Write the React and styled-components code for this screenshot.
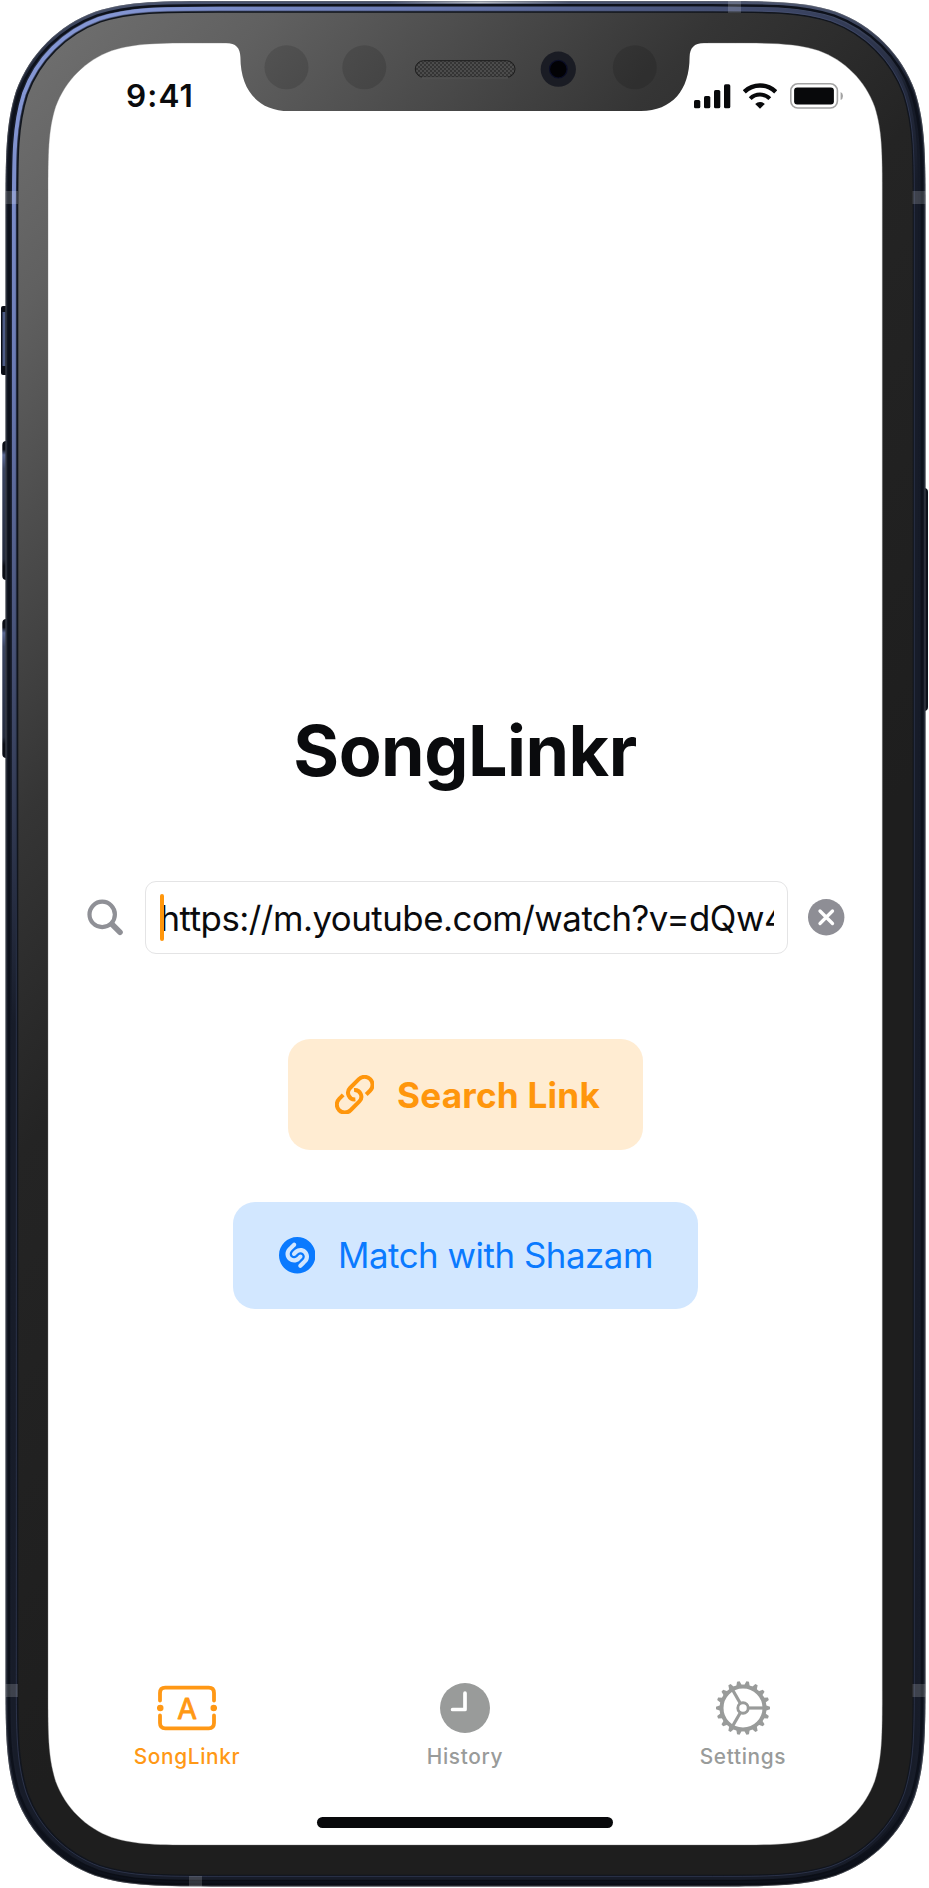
import React from "react";
import styled, { createGlobalStyle } from "styled-components";
import { SiShazam } from "react-icons/si";

const GlobalStyle = createGlobalStyle`
  body { margin: 0; background: #fff; }
  * { box-sizing: border-box; }
`;

const Device = styled.div`
  position: relative;
  width: 929px;
  height: 1888px;
  padding: 43px 47px 43px 48px;
  font-family: Inter, "Liberation Sans", sans-serif;
  color: #0a0b0d;
  overflow: hidden;
`;
const FrameArt = styled.svg`
  position: absolute;
  inset: 0;
`;
const Screen = styled.div`
  position: relative;
  height: 100%;
  display: flex;
  flex-direction: column;
`;
const StatusBar = styled.header`
  height: 106px;
  padding: 0 39px 0 78px;
  display: flex;
  align-items: center;
  justify-content: space-between;
`;
const Time = styled.span`
  font-size: 31.5px;
  font-weight: 600;
  line-height: 40px;
  letter-spacing: 1.1px;
`;
const Indicators = styled.div`
  display: flex;
  align-items: center;
  gap: 12.5px;
  svg { display: block; }
`;
const Main = styled.main`
  flex: 1;
  padding-top: 560px;
  display: flex;
  flex-direction: column;
  align-items: center;
`;
const Title = styled.h1`
  margin: 0 0 88px;
  font-size: 70px;
  line-height: 84px;
  font-weight: 700;
  letter-spacing: -0.5px;
  white-space: nowrap;
`;
const SearchRow = styled.div`
  align-self: stretch;
  height: 73px;
  margin-bottom: 85px;
  padding-left: 39px;
  display: flex;
  align-items: center;
`;
const Field = styled.div`
  width: 643px;
  height: 73px;
  margin: 0 20px 0 22px;
  padding: 0 13.5px 0 13.5px;
  border: 1.5px solid #e4e4e5;
  border-radius: 11px;
  display: flex;
  align-items: center;
  position: relative;
`;
const Caret = styled.i`
  position: absolute;
  left: 14px;
  width: 4px;
  height: 47px;
  border-radius: 2px;
  background: #ff960c;
`;
const Url = styled.div`
  flex: 1;
  overflow: hidden;
  white-space: nowrap;
  font-size: 34.8px;
  font-weight: 400;
  line-height: 48px;
  letter-spacing: -0.48px;
`;
const Action = styled.button`
  border: 0;
  padding: 0 0 0 ${(p) => p.$padLeft}px;
  width: ${(p) => p.$width}px;
  height: ${(p) => p.$height}px;
  margin-bottom: 51.5px;
  border-radius: 22px;
  display: flex;
  align-items: center;
  gap: 23px;
  white-space: nowrap;
  font: ${(p) => p.$weight} ${(p) => p.$size}px Inter, sans-serif;
  letter-spacing: ${(p) => p.$track}px;
  color: ${(p) => p.$color};
  background: ${(p) => p.$bg};
  svg { flex: none; }
`;
const TabBar = styled.nav`
  height: 119px;
  padding-top: 12px;
  display: flex;
`;
const Tab = styled.a`
  flex: 1;
  display: flex;
  flex-direction: column;
  align-items: center;
  font-size: 20.8px;
  line-height: 26px;
  font-weight: 500;
  letter-spacing: 0.68px;
  color: ${(p) => (p.$active ? "#ff9815" : "#999b9a")};
  svg { display: block; margin-bottom: 9px; }
`;
const HomeIndicator = styled.div`
  align-self: center;
  width: 296.5px;
  height: 10.5px;
  margin: 29px 0 17.5px;
  border-radius: 6px;
  background: #08090b;
`;

/* Rounded rectangle with continuous-curvature corners. */
function smoothRect(x, y, w, h, r) {
  const a = 1.52866 * r, b = 1.08849 * r, c = 0.86841 * r;
  const d = 0.63149 * r, e = 0.07491 * r, f = 0.37282 * r, g = 0.16906 * r;
  const R = x + w, B = y + h;
  return [
    `M${x + a} ${y}H${R - a}`,
    `C${R - b} ${y} ${R - c} ${y} ${R - d} ${y + e}`,
    `C${R - f} ${y + g} ${R - g} ${y + f} ${R - e} ${y + d}`,
    `C${R} ${y + c} ${R} ${y + b} ${R} ${y + a}V${B - a}`,
    `C${R} ${B - b} ${R} ${B - c} ${R - e} ${B - d}`,
    `C${R - g} ${B - f} ${R - f} ${B - g} ${R - d} ${B - e}`,
    `C${R - c} ${B} ${R - b} ${B} ${R - a} ${B}H${x + a}`,
    `C${x + b} ${B} ${x + c} ${B} ${x + d} ${B - e}`,
    `C${x + f} ${B - g} ${x + g} ${B - f} ${x + e} ${B - d}`,
    `C${x} ${B - c} ${x} ${B - b} ${x} ${B - a}V${y + a}`,
    `C${x} ${y + b} ${x} ${y + c} ${x + e} ${y + d}`,
    `C${x + g} ${y + f} ${x + f} ${y + g} ${x + d} ${y + e}`,
    `C${x + c} ${y} ${x + b} ${y} ${x + a} ${y}Z`,
  ].join("");
}

const NOTCH =
  "M222 40V43H226C236 43 240 48 240.4 57C240.4 90 258 111 289 111H641C672 111 689.6 90 689.6 57C690 48 694 43 704 43H708V40Z";

function Frame() {
  return (
    <FrameArt width="929" height="1888" viewBox="0 0 929 1888" aria-hidden="true">
      <defs>
        <linearGradient id="glass" gradientUnits="userSpaceOnUse" x1="0" y1="0" x2="909" y2="783">
          <stop offset="0" stopColor="#747474" />
          <stop offset="0.18" stopColor="#606060" />
          <stop offset="0.35" stopColor="#464646" />
          <stop offset="0.46" stopColor="#353535" />
          <stop offset="0.64" stopColor="#242424" />
          <stop offset="1" stopColor="#1e1e1e" />
        </linearGradient>
        <linearGradient id="sheen" gradientUnits="userSpaceOnUse" x1="60" y1="60" x2="600" y2="640">
          <stop offset="0" stopColor="#8496d4" />
          <stop offset="0.25" stopColor="#6a7ab4" />
          <stop offset="0.6" stopColor="#39425f" />
          <stop offset="0.85" stopColor="#171c29" />
        </linearGradient>
        <linearGradient id="rim" gradientUnits="userSpaceOnUse" x1="0" y1="0" x2="0" y2="1888">
          <stop offset="0" stopColor="#4b5571" />
          <stop offset="0.05" stopColor="#151a27" />
          <stop offset="0.95" stopColor="#181d2a" />
          <stop offset="1" stopColor="#090c13" />
        </linearGradient>
        <linearGradient id="glint" x1="0" y1="0" x2="1" y2="0">
          <stop offset="0" stopColor="#b9bdc5" stopOpacity="0" />
          <stop offset="0.5" stopColor="#b9bdc5" />
          <stop offset="1" stopColor="#b9bdc5" stopOpacity="0" />
        </linearGradient>
        <linearGradient id="key" x1="0" y1="0" x2="0" y2="1">
          <stop offset="0" stopColor="#0a0d16" />
          <stop offset="0.06" stopColor="#0a0d16" />
          <stop offset="0.1" stopColor="#5b6995" />
          <stop offset="0.2" stopColor="#39435f" />
          <stop offset="0.85" stopColor="#232a3c" />
          <stop offset="0.9" stopColor="#0a0d16" />
          <stop offset="1" stopColor="#0a0d16" />
        </linearGradient>
        <pattern id="mesh" width="4" height="4" patternUnits="userSpaceOnUse">
          <rect width="4" height="4" fill="#4c4c4c" />
          <circle cx="1" cy="1" r="0.9" fill="#292929" />
          <circle cx="3" cy="3" r="0.9" fill="#292929" />
        </pattern>
      </defs>
      <rect x="1" y="306" width="9" height="69" rx="2" fill="#0b0e17" />
      <rect x="2.5" y="312" width="3" height="54" fill="#4d5b86" />
      <rect x="2.3" y="441" width="9" height="139" rx="4" fill="url(#key)" />
      <rect x="2.3" y="619" width="9" height="139" rx="4" fill="url(#key)" />
      <rect x="919" y="488" width="9" height="223" rx="4" fill="#0e121c" />
      <path d={smoothRect(5.5, 1, 920, 1885.5, 142)} fill="url(#rim)" />
      <path d={smoothRect(6, 1.5, 919, 1884.5, 141.5)} fill="none" stroke="#60646d" strokeOpacity="0.6" />
      <path d={smoothRect(9, 5.2, 913, 1877, 139)} fill="none" stroke="#0d111b" strokeWidth="2.4" />
      <rect x="390" y="1.4" width="180" height="2" fill="url(#glint)" />
      <path d={smoothRect(13.9, 8.8, 902, 1869, 134.5)} fill="none" stroke="url(#sheen)" strokeWidth="4" />
      <path d={smoothRect(17.6, 12, 895.8, 1863.4, 131)} fill="url(#glass)" stroke="#11151d" strokeWidth="1.4" />
      <path d={smoothRect(16.3, 10.8, 898, 1865.6, 132)} fill="none" stroke="#4b587f" strokeOpacity="0.38" strokeWidth="1" />
      <path d={smoothRect(48, 43, 834.3, 1802, 101)} fill="#fff" stroke="#777" strokeOpacity="0.45" strokeWidth="0.8" />
      <path d={NOTCH} fill="url(#glass)" />
      <g fill="#fff" fillOpacity="0.17">
        <rect x="5.5" y="191" width="12.5" height="13" />
        <rect x="912.5" y="191" width="13" height="13" />
        <rect x="728" y="1" width="13" height="12" />
        <rect x="5.5" y="1684" width="12.5" height="13" />
        <rect x="912.5" y="1684" width="13" height="13" />
        <rect x="189" y="1876" width="13" height="10.5" />
      </g>
      <g fill="#000" fillOpacity="0.13">
        <circle cx="286.5" cy="67.3" r="22" />
        <circle cx="364.3" cy="67.3" r="22" />
        <circle cx="634.8" cy="67.3" r="22" />
      </g>
      <rect x="415.3" y="60.7" width="99.7" height="16.6" rx="8.3" fill="url(#mesh)" stroke="#1d1d1d" />
      <path d="M422 77.8H508" stroke="#5d5d5d" />
      <circle cx="558.3" cy="69.2" r="17.6" fill="#1a1c24" />
      <circle cx="558.3" cy="69.2" r="8.8" fill="#020205" stroke="#0a0d26" strokeWidth="1.2" />
    </FrameArt>
  );
}

const Signal = () => (
  <svg width="36.5" height="25" viewBox="0 0 36.5 25" fill="#08090b">
    <rect x="0" y="16" width="6.3" height="8.3" rx="1.6" />
    <rect x="10" y="12" width="6.3" height="12.3" rx="1.6" />
    <rect x="20" y="6" width="6.3" height="18.3" rx="1.6" />
    <rect x="30" y="0.3" width="6.3" height="24" rx="1.6" />
  </svg>
);
const Wifi = () => (
  <svg width="34" height="26" viewBox="0 0 34 26" fill="none" stroke="#08090b">
    <path d="M1.3 8.8A22.7 22.7 0 0 1 32.7 8.8" strokeWidth="4.4" />
    <path d="M7.2 15.6A13.9 13.9 0 0 1 26.8 15.6" strokeWidth="4" />
    <path d="M17 25.8L12.2 21A7 7 0 0 1 21.8 21Z" fill="#08090b" stroke="none" />
  </svg>
);
const Battery = () => (
  <svg width="53.5" height="26" viewBox="0 0 53.5 26">
    <rect x="0.8" y="0.8" width="46.6" height="24.2" rx="7" fill="none" stroke="#a3a3a3" strokeWidth="1.6" />
    <rect x="4.1" y="4.6" width="39.8" height="16.8" rx="3" fill="#08090b" />
    <path d="M50.6 9V17Q53 16 53 13Q53 10 50.6 9Z" fill="#a3a3a3" />
  </svg>
);
const SearchIcon = () => (
  <svg width="36" height="37" viewBox="0 0 36 37" fill="none" stroke="#8f9096">
    <circle cx="15.2" cy="15.4" r="12.7" strokeWidth="4.2" />
    <path d="M25 25.2L33 33.2" strokeWidth="5.6" strokeLinecap="round" />
  </svg>
);
const ClearIcon = () => (
  <svg width="36.5" height="36.5" viewBox="0 0 36.5 36.5">
    <circle cx="18.2" cy="18.2" r="18.2" fill="#8e8e95" />
    <path d="M12 12L24.5 24.5M24.5 12L12 24.5" stroke="#fff" strokeWidth="3.3" strokeLinecap="round" />
  </svg>
);
const LinkIcon = () => (
  <svg width="39.4" height="39.4" viewBox="0 0 118 118" fill="none" stroke="currentColor" strokeWidth="12">
    <path d="M93.5 58.5L105.5 46.5A24 24 0 0 0 71.5 12.5L45 39A20 20 0 0 0 61 73" />
    <path d="M24.5 59.5L12.5 71.5A24 24 0 0 0 46.5 105.5L73 79A20 20 0 0 0 57 45" />
  </svg>
);
const TicketIcon = () => (
  <svg width="60" height="54" viewBox="0 0 60 54" fill="none" stroke="currentColor" strokeWidth="3.8">
    <path
      d="M3 19.5V12Q3 6.7 8.3 6.7H51.7Q57 6.7 57 12V19.5M3 34.5V42Q3 47.3 8.3 47.3H51.7Q57 47.3 57 42V34.5"
      strokeLinecap="round"
    />
    <g fill="currentColor" stroke="none">
      <circle cx="3.2" cy="27" r="3.3" />
      <circle cx="56.8" cy="27" r="3.3" />
    </g>
    <text x="30" y="37.6" textAnchor="middle" fontSize="28.5" fontWeight="400" letterSpacing="0" fill="currentColor" strokeWidth="0.9" strokeLinejoin="round">A</text>
  </svg>
);
const ClockIcon = () => (
  <svg width="54" height="54" viewBox="0 0 54 54">
    <circle cx="27" cy="27" r="25" fill="currentColor" />
    <path d="M27 12.2V28.5H14.6" fill="none" stroke="#fff" strokeWidth="3.7" strokeLinecap="round" strokeLinejoin="round" />
  </svg>
);
const TEETH = Array.from({ length: 18 }, (_, i) => i * 20);
const GearIcon = () => (
  <svg width="54" height="54" viewBox="0 0 54 54" fill="none" stroke="currentColor">
    <circle cx="27" cy="27" r="21.5" strokeWidth="4" />
    <circle cx="27" cy="27" r="5.2" strokeWidth="2.9" />
    {[0, 120, 240].map((a) => (
      <path key={a} d="M33 27H48" strokeWidth="3.2" transform={`rotate(${a} 27 27)`} />
    ))}
    {TEETH.map((a) => (
      <path key={a} d="M49 24L54 25.7V28.3L49 30Z" fill="currentColor" stroke="none" transform={`rotate(${a} 27 27)`} />
    ))}
  </svg>
);

export default function App() {
  return (
    <Device>
      <GlobalStyle />
      <Frame />
      <Screen>
        <StatusBar>
          <Time>9:41</Time>
          <Indicators>
            <Signal />
            <Wifi />
            <Battery />
          </Indicators>
        </StatusBar>
        <Main>
          <Title>SongLinkr</Title>
          <SearchRow>
            <SearchIcon />
            <Field>
              <Url>https://m.youtube.com/watch?v=dQw4w9WgXcQ</Url>
              <Caret />
            </Field>
            <ClearIcon />
          </SearchRow>
          <Action $width={355} $height={111} $padLeft={47} $weight={700} $size={35.2} $track={0.2} $color="#ff960c" $bg="#ffecd2">
            <LinkIcon />
            Search Link
          </Action>
          <Action $width={465} $height={107.5} $padLeft={46} $weight={400} $size={34.8} $track={-0.45} $color="#0a7aff" $bg="#d2e7ff">
            <SiShazam size={36.5} />
            Match with Shazam
          </Action>
        </Main>
        <TabBar>
          <Tab $active>
            <TicketIcon />
            SongLinkr
          </Tab>
          <Tab>
            <ClockIcon />
            History
          </Tab>
          <Tab>
            <GearIcon />
            Settings
          </Tab>
        </TabBar>
        <HomeIndicator />
      </Screen>
    </Device>
  );
}
